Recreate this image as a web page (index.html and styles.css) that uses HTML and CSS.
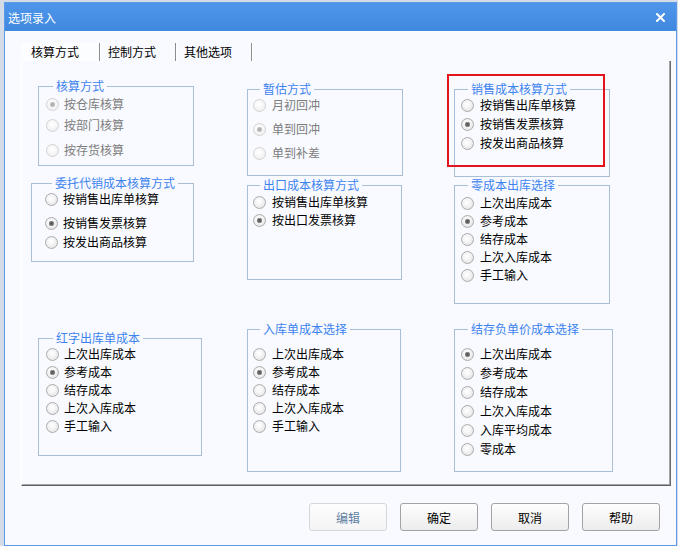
FILE: index.html
```html
<!DOCTYPE html>
<html lang="zh-CN">
<head>
    <meta charset="UTF-8">
    <title>选项录入</title>
    <link rel="stylesheet" href="styles.css">
</head>
<body>
    <!-- 对话框 -->
    <div class="dialog">
        <div class="title-bar">
            <span class="title-text">选项录入</span>
            <button class="close-btn" title="关闭">
                <svg width="9" height="9" viewBox="0 0 9 9">
                    <path d="M1 1 L8 8 M8 1 L1 8" stroke="#fff" stroke-width="2" stroke-linecap="square"/>
                </svg>
            </button>
        </div>

        <div class="dialog-body">
            <!-- 页签 -->
            <div class="tabs">
                <div class="tab active">核算方式</div>
                <div class="tab">控制方式</div>
                <div class="tab">其他选项</div>
            </div>

            <div class="tab-panel">
                <!-- 第一列 -->
                <div class="col">
                    <div class="grp grp-stock">
                        <span class="grp-title">核算方式</span>
                        <div class="opts">
                            <label class="opt"><input type="radio" name="stock" checked disabled><span>按仓库核算</span></label>
                            <label class="opt"><input type="radio" name="stock" disabled><span>按部门核算</span></label>
                            <label class="opt"><input type="radio" name="stock" disabled><span>按存货核算</span></label>
                        </div>
                    </div>
                    <div class="grp grp-consign">
                        <span class="grp-title">委托代销成本核算方式</span>
                        <div class="opts">
                            <label class="opt"><input type="radio" name="consign"><span>按销售出库单核算</span></label>
                            <label class="opt"><input type="radio" name="consign" checked><span>按销售发票核算</span></label>
                            <label class="opt"><input type="radio" name="consign"><span>按发出商品核算</span></label>
                        </div>
                    </div>
                    <div class="grp grp-red">
                        <span class="grp-title">红字出库单成本</span>
                        <div class="opts">
                            <label class="opt"><input type="radio" name="red"><span>上次出库成本</span></label>
                            <label class="opt"><input type="radio" name="red" checked><span>参考成本</span></label>
                            <label class="opt"><input type="radio" name="red"><span>结存成本</span></label>
                            <label class="opt"><input type="radio" name="red"><span>上次入库成本</span></label>
                            <label class="opt"><input type="radio" name="red"><span>手工输入</span></label>
                        </div>
                    </div>
                </div>

                <!-- 第二列 -->
                <div class="col">
                    <div class="grp grp-est">
                        <span class="grp-title">暂估方式</span>
                        <div class="opts">
                            <label class="opt"><input type="radio" name="est" disabled><span>月初回冲</span></label>
                            <label class="opt"><input type="radio" name="est" checked disabled><span>单到回冲</span></label>
                            <label class="opt"><input type="radio" name="est" disabled><span>单到补差</span></label>
                        </div>
                    </div>
                    <div class="grp grp-export">
                        <span class="grp-title">出口成本核算方式</span>
                        <div class="opts">
                            <label class="opt"><input type="radio" name="export"><span>按销售出库单核算</span></label>
                            <label class="opt"><input type="radio" name="export" checked><span>按出口发票核算</span></label>
                        </div>
                    </div>
                    <div class="grp grp-in">
                        <span class="grp-title">入库单成本选择</span>
                        <div class="opts">
                            <label class="opt"><input type="radio" name="in"><span>上次出库成本</span></label>
                            <label class="opt"><input type="radio" name="in" checked><span>参考成本</span></label>
                            <label class="opt"><input type="radio" name="in"><span>结存成本</span></label>
                            <label class="opt"><input type="radio" name="in"><span>上次入库成本</span></label>
                            <label class="opt"><input type="radio" name="in"><span>手工输入</span></label>
                        </div>
                    </div>
                </div>

                <!-- 第三列 -->
                <div class="col">
                    <div class="grp grp-sale">
                        <span class="grp-title">销售成本核算方式</span>
                        <div class="opts">
                            <label class="opt"><input type="radio" name="sale"><span>按销售出库单核算</span></label>
                            <label class="opt"><input type="radio" name="sale" checked><span>按销售发票核算</span></label>
                            <label class="opt"><input type="radio" name="sale"><span>按发出商品核算</span></label>
                        </div>
                    </div>
                    <div class="grp grp-zero">
                        <span class="grp-title">零成本出库选择</span>
                        <div class="opts">
                            <label class="opt"><input type="radio" name="zero"><span>上次出库成本</span></label>
                            <label class="opt"><input type="radio" name="zero" checked><span>参考成本</span></label>
                            <label class="opt"><input type="radio" name="zero"><span>结存成本</span></label>
                            <label class="opt"><input type="radio" name="zero"><span>上次入库成本</span></label>
                            <label class="opt"><input type="radio" name="zero"><span>手工输入</span></label>
                        </div>
                    </div>
                    <div class="grp grp-neg">
                        <span class="grp-title">结存负单价成本选择</span>
                        <div class="opts">
                            <label class="opt"><input type="radio" name="neg" checked><span>上次出库成本</span></label>
                            <label class="opt"><input type="radio" name="neg"><span>参考成本</span></label>
                            <label class="opt"><input type="radio" name="neg"><span>结存成本</span></label>
                            <label class="opt"><input type="radio" name="neg"><span>上次入库成本</span></label>
                            <label class="opt"><input type="radio" name="neg"><span>入库平均成本</span></label>
                            <label class="opt"><input type="radio" name="neg"><span>零成本</span></label>
                        </div>
                    </div>
                </div>

                <!-- 红框标注 -->
                <div class="mark"></div>
            </div>

            <!-- 底部按钮 -->
            <div class="footer">
                <button class="btn" disabled>编辑</button>
                <button class="btn">确定</button>
                <button class="btn">取消</button>
                <button class="btn">帮助</button>
            </div>
        </div>
    </div>
</body>
</html>
```

FILE: styles.css
```css
* {
    margin: 0;
    padding: 0;
    box-sizing: border-box;
}

body {
    font-family: "Noto Sans CJK SC", "Liberation Sans", sans-serif;
    font-size: 12px;
    background: #d3dce7;
    color: #000;
    width: 678px;
    height: 546px;
    overflow: hidden;
}

/* 对话框外框 */
.dialog {
    margin: 2px 0 0 4px;
    width: 673px;
    height: 544px;
    border: 1px solid #5a9ae6;
    background: #f8faff;
    display: flex;
    flex-direction: column;
}

.title-bar {
    height: 28px;
    background: linear-gradient(#4d96ea, #3f88df);
    display: flex;
    align-items: center;
    justify-content: space-between;
    padding: 0 11px 0 3px;
}

.title-text {
    color: #fff;
    font-size: 12px;
}

.close-btn {
    background: none;
    border: none;
    display: flex;
    cursor: pointer;
}

.dialog-body {
    flex: 1;
    padding: 12px 4px 0 16px;
}

/* 页签 */
.tabs {
    display: flex;
    height: 18px;
}

.tab {
    padding: 0 19px 0 8px;
    line-height: 18px;
    border-right: 1px solid #8c8c8c;
    box-shadow: 1px 0 0 #fff;
}

.tab.active {
    padding-left: 10px;
    padding-right: 20px;
    background: #fcfdff;
}

.tab-panel {
    position: relative;
    width: 650px;
    height: 425px;
    border-left: 1px solid #fff;
    border-right: 1px solid #6a6a6a;
    border-bottom: 1px solid #5e5e5e;
    box-shadow: inset -1px -1px 0 #a5a5a5;
    display: grid;
    grid-template-columns: 225px 207px 1fr;
}

.col {
    display: flex;
    flex-direction: column;
    align-items: flex-start;
}

/* 分组框 */
.grp {
    border: 1px solid #a9bfd6;
}

.grp-title {
    display: block;
    width: fit-content;
    margin: -8px 0 0 7px;
    padding: 0 3px;
    height: 14px;
    line-height: 14px;
    background: #f8faff;
    color: #3d83ef;
}

.opts {
    display: flex;
    flex-direction: column;
}

.opt {
    display: flex;
    align-items: center;
    gap: 6px;
    height: 18px;
    line-height: 18px;
    white-space: nowrap;
}

.opt input {
    appearance: none;
    -webkit-appearance: none;
    width: 13px;
    height: 13px;
    border-radius: 50%;
    border: 1px solid #acacac;
    background: radial-gradient(circle at 45% 40%, #fff 0, #f6f6f6 35%, #dcdcdc 100%);
    flex: none;
}

.opt input:checked {
    background: radial-gradient(circle, #4f4f4f 0, #6a6a6a 1.5px, #9a9a9a 2.5px, transparent 3px),
                radial-gradient(circle at 45% 40%, #fff 0, #f6f6f6 35%, #dcdcdc 100%);
}

.opt input:disabled {
    border-color: #d3d3d3;
    background: radial-gradient(circle at 45% 40%, #fff 0, #f8f8f8 40%, #ebebeb 100%);
}

.opt input:disabled:checked {
    background: radial-gradient(circle, #a8a8a8 0, #b5b5b5 1.5px, #cfcfcf 2.5px, transparent 3px),
                radial-gradient(circle at 45% 40%, #fff 0, #f8f8f8 40%, #ebebeb 100%);
}

.opt input:disabled + span {
    color: #7d7d7d;
}

/* 第一列 */
.grp-stock {
    margin: 25px 0 0 16px;
    width: 156px;
    height: 80px;
    padding-left: 7px;
}

.grp-stock .opts {
    padding-top: 2px;
    gap: 3px;
}

.grp-stock .opt:last-child {
    margin-top: 4px;
}

.grp-consign {
    margin: 17px 0 0 9px;
    width: 163px;
    height: 79px;
    padding-left: 13px;
}

.grp-consign .opts {
    gap: 1px;
}

.grp-consign .opt:nth-child(2) {
    margin-top: 5px;
}

.grp-red {
    margin: 76px 0 0 16px;
    width: 164px;
    height: 118px;
    padding-left: 7px;
}

.grp-stock .opt,
.grp-consign .opt,
.grp-red .opt {
    gap: 5px;
}

/* 第二列 */
.grp-est {
    margin-top: 28px;
    width: 156px;
    height: 87px;
    padding-left: 5px;
}

.grp-est .opts {
    gap: 6px;
}

.grp-export {
    margin-top: 9px;
    width: 155px;
    height: 95px;
    padding-left: 5px;
}

.grp-export .opts {
    padding-top: 1px;
}

.grp-in {
    margin-top: 49px;
    width: 154px;
    height: 143px;
    padding-left: 5px;
}

.grp-in .opts {
    padding-top: 9px;
}

/* 第三列 */
.grp-sale {
    margin-top: 28px;
    width: 156px;
    height: 88px;
    padding-left: 6px;
}

.grp-sale .opts {
    gap: 1px;
}

.grp-zero {
    margin-top: 8px;
    width: 156px;
    height: 119px;
    padding-left: 6px;
}

.grp-zero .opts {
    padding-top: 2px;
}

.grp-neg {
    margin-top: 25px;
    width: 159px;
    height: 143px;
    padding-left: 6px;
}

.grp-neg .opts {
    padding-top: 9px;
    gap: 1px;
}

/* 红框标注 */
.mark {
    position: absolute;
    left: 425px;
    top: 13px;
    width: 158px;
    height: 93px;
    border: 2px solid #e3141b;
    pointer-events: none;
}

/* 底部按钮 */
.footer {
    display: flex;
    justify-content: flex-end;
    gap: 13px;
    margin-top: 17px;
    padding-right: 12px;
}

.btn {
    width: 78px;
    height: 28px;
    border: 1px solid #a3a3a3;
    border-radius: 3px;
    background: linear-gradient(#fefefe, #ececec);
    font-family: inherit;
    font-size: 12px;
    color: #000;
    cursor: pointer;
}

.btn:disabled {
    border-color: #d6d6d6;
    background: linear-gradient(#fdfdfd, #f4f4f4);
    color: #5f7fa2;
    cursor: default;
}
```
